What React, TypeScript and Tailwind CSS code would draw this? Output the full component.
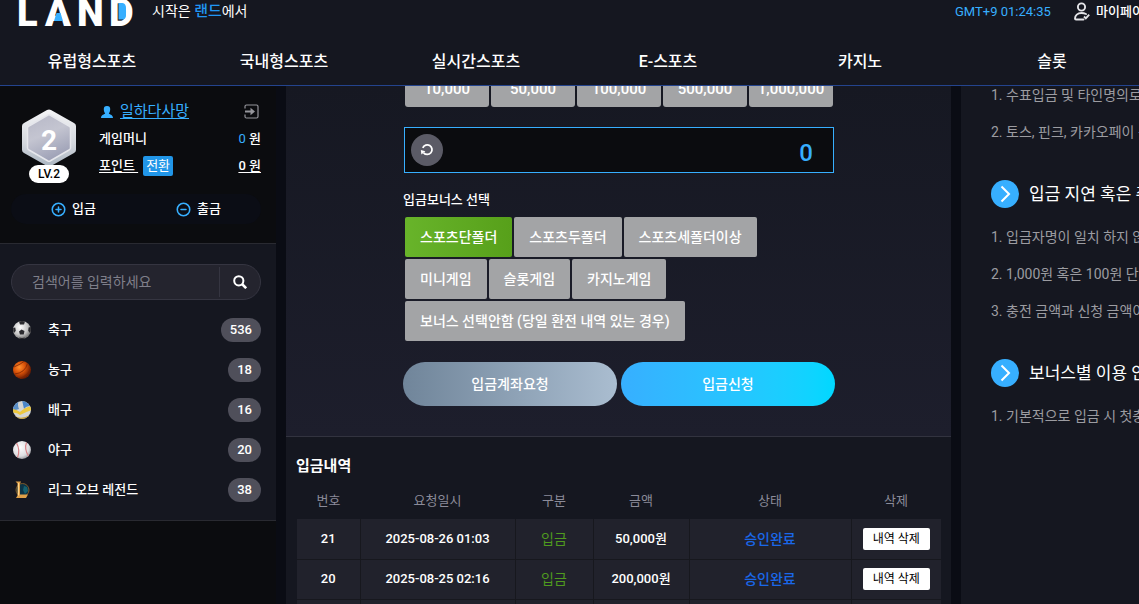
import React, { useState } from "react";
import { CircleMinus, CirclePlus } from "lucide-react";

interface Category {
  name: string;
  count: number;
  icon: React.ReactNode;
}

interface Deposit {
  id: number;
  date: string;
  amount: string;
}

const navItems = ["유럽형스포츠", "국내형스포츠", "실시간스포츠", "E-스포츠", "카지노", "슬롯"];

const amounts = ["10,000", "50,000", "100,000", "500,000", "1,000,000"];

const bonuses = [
  "스포츠단폴더",
  "스포츠두폴더",
  "스포츠세폴더이상",
  "미니게임",
  "슬롯게임",
  "카지노게임",
  "보너스 선택안함 (당일 환전 내역 있는 경우)",
];

const deposits: Deposit[] = [
  { id: 21, date: "2025-08-26 01:03", amount: "50,000원" },
  { id: 20, date: "2025-08-25 02:16", amount: "200,000원" },
  { id: 19, date: "2025-08-24 22:40", amount: "100,000원" },
];

const Logo = () => (
  <svg width="116" height="28" viewBox="0 0 116 28" role="img" aria-label="LAND">
    <text y="26" fill="#fff" fontSize="38" fontWeight="900" fontFamily="Roboto, sans-serif">
      <tspan x="-1">L</tspan>
      <tspan x="27">A</tspan>
      <tspan x="59">N</tspan>
      <tspan x="91">D</tspan>
    </text>
    <path d="M36 21L38.500 13h4L45 21z" fill="#37afff" />
    <path d="M100.500 3h4Q108 3.500 108 8v7Q108 19 104.500 19.500h-4z" fill="#37afff" />
  </svg>
);

const SoccerBall = () => (
  <svg width="20" height="20" viewBox="0 0 20 20" aria-hidden="true">
    <defs>
      <radialGradient id="soccer" cx="0.4" cy="0.35" r="0.7">
        <stop offset="0" stopColor="#fff" />
        <stop offset="0.6" stopColor="#c4c4c4" />
        <stop offset="1" stopColor="#666" />
      </radialGradient>
    </defs>
    <circle cx="10" cy="10" r="9" fill="url(#soccer)" />
    <g fill="#2a2a2e">
      <path d="M9.500 9.500l3 1.500-.8 3.500H8L7 11.500z" />
      <path d="M7 1.600Q10 .6 13 1.600L12 4.500H8z" />
      <path d="M1.200 8L3.200 7.500l.6 3.200-1.800 2.400Q.8 11 1.200 8z" />
      <path d="M18.800 7L16.600 7.500l-.4 3.200 1.800 2.400Q19.200 11 18.800 7z" />
      <path d="M7 17.500l3 .4 3-.4-1.200 1.300Q10 19.200 8.200 18.700z" />
    </g>
  </svg>
);

const Basketball = () => (
  <svg width="20" height="20" viewBox="0 0 20 20" aria-hidden="true">
    <defs>
      <radialGradient id="basket" cx="0.35" cy="0.35" r="0.65">
        <stop offset="0" stopColor="#ff9030" />
        <stop offset="0.5" stopColor="#d95208" />
        <stop offset="1" stopColor="#6e1d02" />
      </radialGradient>
    </defs>
    <circle cx="10" cy="10" r="9" fill="url(#basket)" />
    <g fill="none" stroke="#7a2404" strokeWidth="0.8">
      <path d="M2 7Q9 4 12 1.500" />
      <path d="M2.500 14Q13 13 15.500 3.500" />
      <path d="M8 18.500Q15 16 18.500 9" />
    </g>
  </svg>
);

const Volleyball = () => (
  <svg width="20" height="20" viewBox="0 0 20 20" aria-hidden="true">
    <defs>
      <clipPath id="volley">
        <circle cx="10" cy="10" r="9" />
      </clipPath>
    </defs>
    <g clipPath="url(#volley)">
      <rect width="20" height="20" fill="#d3d5d3" />
      <path d="M0 0h7Q5 5 7 9L0 11z" fill="#5a8fc8" />
      <path d="M10 0h10v6Q14 6 12 9z" fill="#4a86c8" />
      <path d="M0 9Q4 9 8 12 13 7 20 6v4Q14 12 8 15 4 12 0 13z" fill="#ecc83e" />
      <path d="M3 16Q9 20 18 15v5H3z" fill="#c9a133" />
    </g>
  </svg>
);

const Baseball = () => (
  <svg width="20" height="20" viewBox="0 0 20 20" aria-hidden="true">
    <defs>
      <radialGradient id="base" cx="0.4" cy="0.35" r="0.7">
        <stop offset="0" stopColor="#fff" />
        <stop offset="0.7" stopColor="#dcdcdf" />
        <stop offset="1" stopColor="#8e8e94" />
      </radialGradient>
    </defs>
    <circle cx="10" cy="10" r="9" fill="url(#base)" />
    <g fill="none" stroke="#d98488" strokeWidth="1.200">
      <path d="M4.500 3Q8.500 10 5.500 17.500" />
      <path d="M14.500 2.500Q12 9 16.500 16" />
    </g>
  </svg>
);

const League = () => (
  <svg width="20" height="20" viewBox="0 0 20 20" aria-hidden="true">
    <circle cx="10.500" cy="10" r="6.500" fill="#0c3446" stroke="#7d5a2a" />
    <path d="M12 6l3 1 1 4-3 3-2-4z" fill="#14606f" />
    <path d="M3.500 1.500H9L8 3.500V14.500h8L14 18H4l1.500-2.500V3.500z" fill="#dfa048" />
    <path d="M6.500 3v12.500" stroke="#ffd68c" />
  </svg>
);

const categories: Category[] = [
  { name: "축구", count: 536, icon: <SoccerBall /> },
  { name: "농구", count: 18, icon: <Basketball /> },
  { name: "배구", count: 16, icon: <Volleyball /> },
  { name: "야구", count: 20, icon: <Baseball /> },
  { name: "리그 오브 레전드", count: 38, icon: <League /> },
];

const LevelBadge = () => (
  <div className="flex w-[54px] flex-col items-center">
    <svg width="54" height="58" viewBox="0 0 54 58" aria-label="레벨 2" role="img">
      <defs>
        <linearGradient id="rim" x1="0" y1="0" x2="0" y2="1">
          <stop offset="0" stopColor="#f4f4f6" />
          <stop offset="0.6" stopColor="#d3d7dd" />
          <stop offset="1" stopColor="#a9b4c0" />
        </linearGradient>
        <linearGradient id="face" x1="0" y1="0" x2="0.4" y2="1">
          <stop offset="0" stopColor="#b6b7c6" />
          <stop offset="0.5" stopColor="#c4c5d1" />
          <stop offset="1" stopColor="#a0a3b8" />
        </linearGradient>
      </defs>
      <path
        d="M25 1Q27 0 29 1L52 14Q54 15 54 17V41Q54 43 52 44L29 57Q27 58 25 57L2 44Q0 43 0 41V17Q0 15 2 14Z"
        fill="url(#rim)"
      />
      <path
        d="M26 6Q27 5.500 28 6L47 17Q48.500 18 48.500 19V39Q48.500 40 47 41L28 52Q27 52.500 26 52L7 41Q5.500 40 5.500 39V19Q5.500 18 7 17Z"
        fill="url(#face)"
        stroke="#e6e7ec"
        strokeWidth="1.500"
      />
      <text x="27" y="41" textAnchor="middle" fontSize="28" fontWeight="700" fontFamily="Roboto, sans-serif" fill="#fff">
        2
      </text>
    </svg>
    <span className="relative -mt-0.5 h-[18px] w-10 rounded-full bg-white text-center text-[12px] leading-[18px] font-medium text-black">
      LV.2
    </span>
  </div>
);

const Header = () => (
  <header className="h-[86px] shrink-0 overflow-hidden border-b border-[#24448e] bg-[#151720]">
    <div className="flex h-9 items-start pl-[18px]">
      <a href="#home">
        <Logo />
      </a>
      <p className="ml-[18px] text-sm leading-[22px]">
        시작은 <span className="text-[15px] font-medium text-[#2196f3]">랜드</span>에서
      </p>
      <div className="ml-auto flex h-6 w-[184px] shrink-0 items-center overflow-hidden whitespace-nowrap">
        <time className="w-[119px] shrink-0 text-[13px] text-[#37afff]">GMT+9 01:24:35</time>
        <a href="#mypage" className="flex items-center gap-1.5 text-[13px] font-medium">
          <svg width="16" height="20" viewBox="0 0 16 20" fill="none" stroke="#e4e4e8" strokeWidth="1.900" className="shrink-0">
            <circle cx="7.500" cy="5" r="3.600" />
            <path d="M12 12Q10 11 7.500 11C3.500 11 1 13.500 1 16.500Q1 17.500 2 17.500H9.500" strokeLinecap="round" />
            <path d="M10 14.500l1.800 1.800 3.400-3.600" />
          </svg>
          마이페이지
        </a>
      </div>
    </div>
    <nav className="-mr-[9px] -ml-1 grid h-[51px] grid-cols-6 items-center">
      {navItems.map((item) => (
        <a key={item} href="#nav" className="text-center text-base font-medium">
          {item}
        </a>
      ))}
    </nav>
  </header>
);

const Profile = () => (
  <section className="h-[158px] border-b border-[#292a31] bg-[#0b0c0f] pt-3 pr-[15px] pl-[11px]">
    <div className="flex pl-[11px]">
      <div className="mt-[11px]">
        <LevelBadge />
      </div>
      <div className="ml-[23px] flex-1 text-[13px] font-medium">
        <div className="flex h-[27px] items-center">
          <svg width="16" height="14" viewBox="0 0 16 14" fill="#37afff" aria-hidden="true">
            <path d="M8 1a3.200 3.200 0 0 1 3.200 3.400C11.200 6.500 10 8 9.800 8.600 10.200 9.500 14 9.600 14 13H2C2 9.600 5.800 9.500 6.200 8.600 6 8 4.800 6.500 4.800 4.400A3.200 3.200 0 0 1 8 1z" />
          </svg>
          <a href="#me" className="ml-[5px] text-[15px] font-normal text-[#37afff] underline underline-offset-2">
            일하다사망
          </a>
          <button type="button" aria-label="로그아웃" className="mr-0.5 ml-auto">
            <svg width="15" height="15" viewBox="0 0 15 15" fill="none" stroke="#96969c" strokeWidth="1.200">
              <path d="M1 4.500V2.500Q1 1 2.500 1H12.500Q14 1 14 2.500V12.500Q14 14 12.500 14H2.500Q1 14 1 12.500V10.500" />
              <path d="M1 7.500H7" strokeWidth="2" />
              <path d="M6.500 3.800L11 7.500 6.500 11.200z" fill="#96969c" stroke="none" />
            </svg>
          </button>
        </div>
        <div className="flex h-[27px] items-center justify-between">
          <span>게임머니</span>
          <span>
            <span className="font-normal text-[#37afff]">0</span> 원
          </span>
        </div>
        <div className="flex h-[27px] items-center">
          <a href="#point" className="whitespace-pre underline underline-offset-2">{"포인트 "}</a>
          <button type="button" className="ml-[5px] h-5 rounded-xs bg-[#2196e8] px-[3px] font-normal">
            전환
          </button>
          <a href="#point" className="ml-auto underline underline-offset-2">
            0 원
          </a>
        </div>
      </div>
    </div>
    <div className="mt-[11px] grid h-[30px] grid-cols-2 rounded-full bg-[#0b0d15] text-[13px] font-medium">
      <button type="button" className="flex items-center justify-center gap-1.5">
        <CirclePlus size={15} strokeWidth={2.5} color="#37afff" />
        입금
      </button>
      <button type="button" className="flex items-center justify-center gap-1.5">
        <CircleMinus size={15} strokeWidth={2.5} color="#37afff" />
        출금
      </button>
    </div>
  </section>
);

const Sidebar = () => (
  <aside className="w-[276px] shrink-0 bg-[#0b0c0f]">
    <Profile />
    <section className="border-b border-[#292a31] bg-[#151720] pt-5 pr-[15px] pb-2.5 pl-[11px]">
      <form className="flex h-9 overflow-hidden rounded-full border border-[#353541] bg-[#24242e]">
        <input
          type="text"
          aria-label="검색"
          placeholder="검색어를 입력하세요"
          className="min-w-0 flex-1 pl-5 text-sm outline-none placeholder:text-[#7f7f8a]"
        />
        <button type="button" aria-label="검색하기" className="my-0.5 flex w-[41px] items-center justify-center border-l border-[#353541]">
          <svg width="14" height="14" viewBox="0 0 14 14" fill="none" stroke="#fff" strokeWidth="2">
            <circle cx="5.800" cy="5.800" r="4.600" />
            <path d="M9 9l4.200 4.200" strokeWidth="2.600" />
          </svg>
        </button>
      </form>
      <ul className="mt-2.5">
        {categories.map((category) => (
          <li key={category.name}>
            <a href="#category" className="flex h-10 items-center pl-px text-[13px] font-medium">
              {category.icon}
              <span className="ml-4">{category.name}</span>
              <span className="ml-auto h-6 rounded-full bg-[#4f4f5a] px-[9px] leading-6">{category.count}</span>
            </a>
          </li>
        ))}
      </ul>
    </section>
  </aside>
);

const DepositForm = () => {
  const [bonus, setBonus] = useState(bonuses[0]);

  return (
    <section className="border-b border-[#32333f] bg-linear-to-b from-[#161822] to-[#1d1e2c] pr-[116px] pb-[30px] pl-[117px]">
      {/* The amount buttons are half scrolled under the header */}
      <div className="mx-0.5 flex h-[21px] items-end gap-0.5 overflow-hidden">
        {amounts.map((amount) => (
          <button key={amount} type="button" className="h-9 flex-1 rounded-[3px] bg-[#a3a4a6] text-[15px] font-medium">
            {amount}
          </button>
        ))}
      </div>

      <div className="mx-px mt-5 flex h-[46px] items-center border border-[#37afff] bg-[#0b0c0f] pl-1.5">
        <button type="button" aria-label="초기화" className="flex size-8 shrink-0 items-center justify-center rounded-full bg-[#5b5b66]">
          <svg width="14" height="14" viewBox="0 0 14 14" fill="none" stroke="#fff" strokeWidth="1.800">
            <path d="M2.800 4.800A4.800 4.800 0 1 1 3.600 9.800" />
            <path d="M.8 7L5.400 8.200 1.400 11.600z" fill="#fff" stroke="none" />
          </svg>
        </button>
        <input
          type="text"
          aria-label="입금 금액"
          defaultValue="0"
          className="min-w-0 flex-1 pt-1.5 pr-5 text-right text-2xl font-medium text-[#37afff] outline-none"
        />
      </div>

      <h2 className="mt-[17px] text-[13px] leading-5 font-medium">입금보너스 선택</h2>
      <div className="mt-[7px] flex flex-wrap gap-0.5 pl-0.5">
        {bonuses.map((item) => (
          <button
            key={item}
            type="button"
            onClick={() => setBonus(item)}
            className={`h-10 rounded-xs px-[15px] text-sm font-medium ${
              item === bonus ? "bg-linear-to-r from-[#68b42a] to-[#57a01a]" : "bg-[#a3a4a6]"
            }`}
          >
            {item}
          </button>
        ))}
      </div>

      <div className="mt-[21px] flex gap-1 text-sm font-medium">
        <button type="button" className="h-11 flex-1 rounded-full bg-linear-to-r from-[#70859a] to-[#aabdd0]">
          입금계좌요청
        </button>
        <button type="button" className="h-11 flex-1 rounded-full bg-linear-to-r from-[#37afff] to-[#00d8ff]">
          입금신청
        </button>
      </div>
    </section>
  );
};

const DepositHistory = () => (
  <section className="px-2.5 pt-[17px]">
    <h2 className="text-[15px] leading-6 font-bold">입금내역</h2>
    <div className="mt-1 pl-px">
      <table className="w-full table-fixed text-center text-[13px]">
        <colgroup>
          <col className="w-[63px]" />
          <col className="w-[155px]" />
          <col className="w-[78px]" />
          <col className="w-24" />
          <col />
          <col className="w-[90px]" />
        </colgroup>
        <thead>
          <tr className="h-[37px] text-[#8b8b99]">
            {["번호", "요청일시", "구분", "금액", "상태", "삭제"].map((title) => (
              <th key={title} className="font-normal">
                {title}
              </th>
            ))}
          </tr>
        </thead>
        <tbody className="font-medium">
          {deposits.map((deposit) => (
            <tr key={deposit.id} className="h-10 bg-[#21222c]">
              <td className="border-b border-[#17181e]">{deposit.id}</td>
              <td className="border-b border-l border-[#17181e]">{deposit.date}</td>
              <td className="border-b border-l border-[#17181e] text-sm font-normal text-[#4f9a1f]">입금</td>
              <td className="border-b border-l border-[#17181e]">{deposit.amount}</td>
              <td className="border-b border-l border-[#17181e] text-sm text-[#1a68ea]">승인완료</td>
              <td className="border-b border-l border-[#17181e]">
                <button type="button" className="h-[22px] rounded-xs bg-white px-2.5 align-middle text-[12px] font-normal text-black">
                  내역 삭제
                </button>
              </td>
            </tr>
          ))}
        </tbody>
      </table>
    </div>
  </section>
);

const GuideTitle = ({ children }: { children: React.ReactNode }) => (
  <h3 className="flex items-center gap-2.5 text-[17px] leading-7 font-normal text-white">
    <svg width="28" height="28" viewBox="0 0 28 28" className="shrink-0" aria-hidden="true">
      <circle cx="14" cy="14" r="14" fill="#37afff" />
      <path d="M10.500 6.500L18 14l-7.500 7.500" fill="none" stroke="#fff" strokeWidth="2" />
    </svg>
    {children}
  </h3>
);

const Guide = () => (
  <aside className="ml-2.5 w-[178px] shrink-0 overflow-hidden bg-[#151720] pl-[30px] text-sm leading-[37px] whitespace-nowrap text-[#9c9ca1]">
    <div className="-mt-[9px]">
      <p>1. 수표입금 및 타인명의로 입금</p>
      <p>2. 토스, 핀크, 카카오페이 등</p>
    </div>
    <div className="mt-[29px]">
      <GuideTitle>입금 지연 혹은 취소</GuideTitle>
    </div>
    <div className="mt-[11px]">
      <p>1. 입금자명이 일치 하지 않을</p>
      <p>2. 1,000원 혹은 100원 단위</p>
      <p>3. 충전 금액과 신청 금액이</p>
    </div>
    <div className="mt-[29px]">
      <GuideTitle>보너스별 이용 안내</GuideTitle>
    </div>
    <div className="mt-[11px]">
      <p>1. 기본적으로 입금 시 첫충전</p>
    </div>
  </aside>
);

const App: React.FC = () => (
  <div className="flex h-screen flex-col overflow-hidden bg-[#0a0c14] font-[Roboto,'Noto_Sans_CJK_KR',sans-serif] text-white">
    <Header />
    <div className="flex min-h-0 flex-1">
      <Sidebar />
      <main className="ml-2.5 min-w-0 flex-1 overflow-hidden bg-[#151720]">
        <DepositForm />
        <DepositHistory />
      </main>
      <Guide />
    </div>
  </div>
);

export default App;
